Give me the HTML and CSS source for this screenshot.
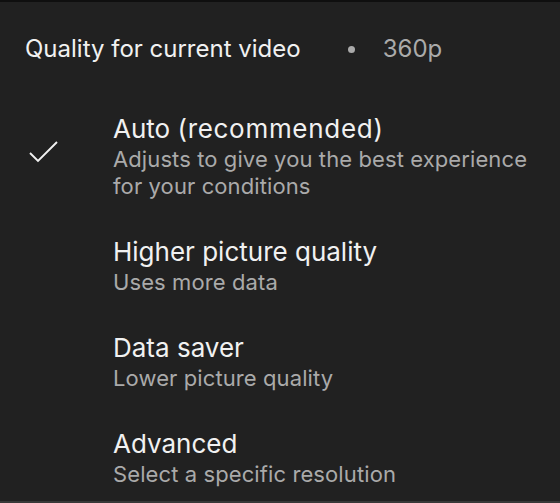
FILE: index.html
```html
<!DOCTYPE html>
<html lang="en">
<head>
    <meta charset="UTF-8">
    <meta name="viewport" content="width=device-width, initial-scale=1.0">
    <title>Quality</title>
    <link rel="stylesheet" href="styles.css">
</head>
<body>
    <div class="sheet">
        <div class="sheet-header">
            <span>Quality for current video</span>
            <span class="dot"></span>
            <span class="current">360p</span>
        </div>

        <div class="option">
            <div class="check">
                <svg width="30" height="22" viewBox="0 0 30 22">
                    <path d="M1 12 L9 20 L28 1" fill="none" stroke="#f1f1f1" stroke-width="1.9"/>
                </svg>
            </div>
            <div class="option-text">
                <div class="title">Auto <span class="paren">(recommended)</span></div>
                <div class="sub">Adjusts to give you the best experience<br>for your conditions</div>
            </div>
        </div>

        <div class="option">
            <div class="check"></div>
            <div class="option-text">
                <div class="title">Higher picture quality</div>
                <div class="sub">Uses more data</div>
            </div>
        </div>

        <div class="option">
            <div class="check"></div>
            <div class="option-text">
                <div class="title">Data saver</div>
                <div class="sub">Lower picture quality</div>
            </div>
        </div>

        <div class="option">
            <div class="check"></div>
            <div class="option-text">
                <div class="title">Advanced</div>
                <div class="sub">Select a specific resolution</div>
            </div>
        </div>
    </div>
</body>
</html>
```

FILE: styles.css
```css
body, html {
    margin: 0;
    padding: 0;
    background: #212121;
    font-family: Inter, Roboto, sans-serif;
}
.sheet {
    height: 100vh;
    box-sizing: border-box;
    border-top: 2px solid #0f0f0f;
    border-bottom: 2px solid #383838;
    overflow: hidden;
}
.sheet-header {
    display: flex;
    align-items: center;
    padding: 32px 0 30px 25px;
    font-size: 24px;
    line-height: 30px;
    color: #f1f1f1;
}
.dot {
    width: 7px;
    height: 7px;
    border-radius: 50%;
    background: #aaaaaa;
    margin: 0 28px 0 47px;
}
.current {
    color: #aaaaaa;
}
.option {
    display: flex;
    padding: 20px 0 17px 0;
}
.check {
    width: 113px;
    flex-shrink: 0;
    display: flex;
    align-items: center;
    padding-left: 29px;
    box-sizing: border-box;
    padding-bottom: 10px;
}
.title {
    font-size: 26px;
    line-height: 30px;
    color: #f1f1f1;
}
.paren {
    letter-spacing: 0.7px;
}
.sub {
    font-size: 22px;
    line-height: 27px;
    letter-spacing: 0.1px;
    padding-top: 2px;
    color: #aaaaaa;
}
```
